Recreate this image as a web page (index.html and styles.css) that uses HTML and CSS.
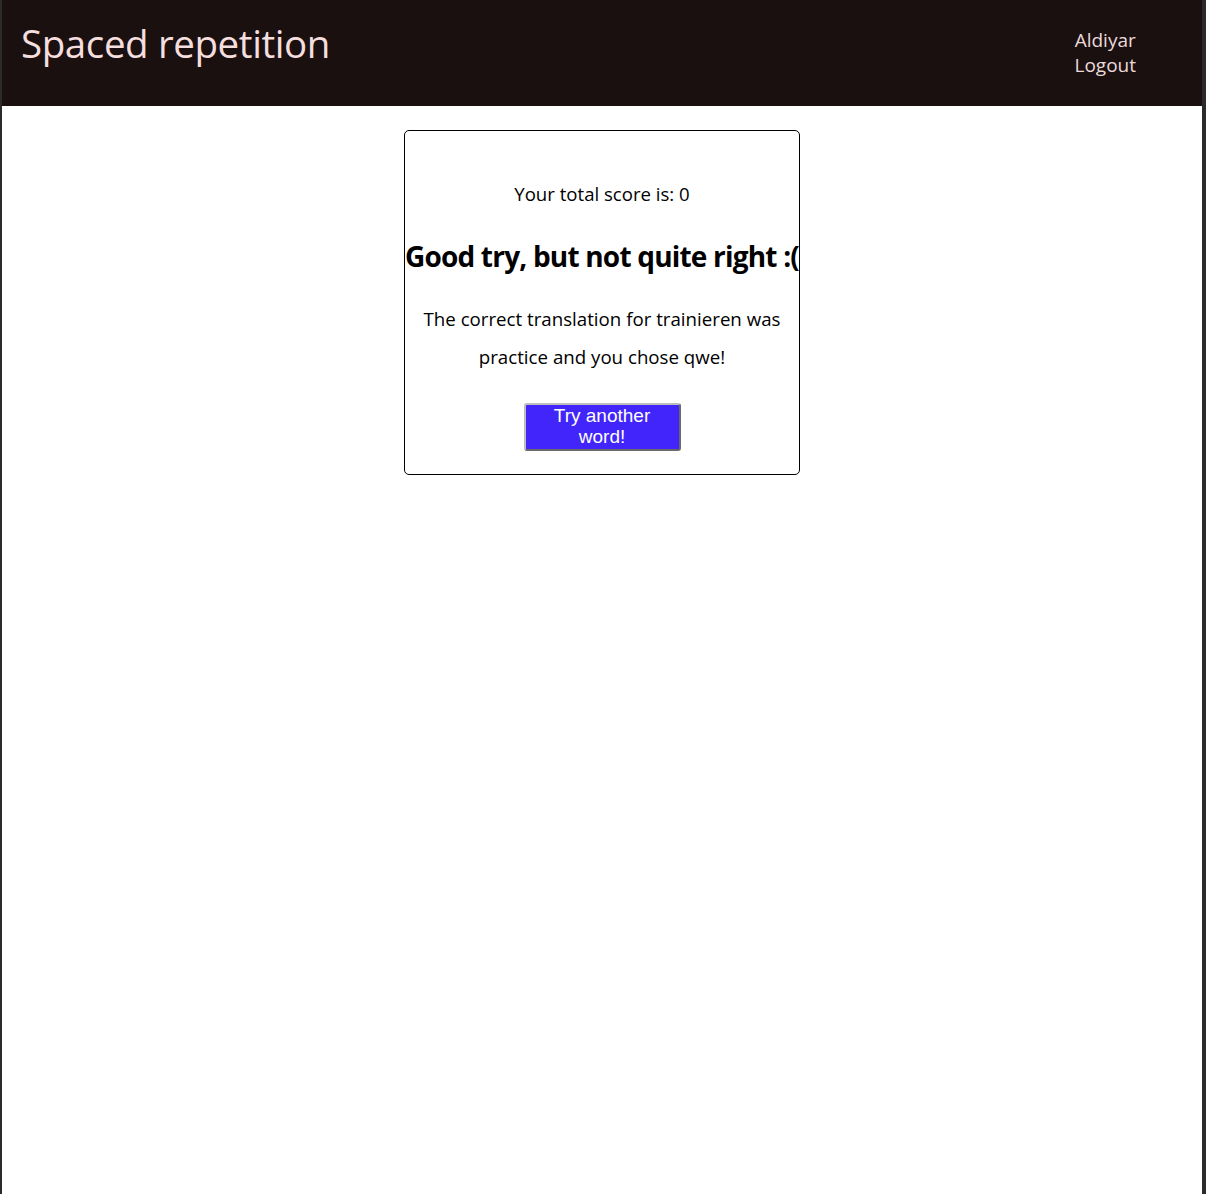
FILE: index.html
```html
<!DOCTYPE html>
<html lang="en">
<head>
<meta charset="utf-8">
<title>Spaced repetition</title>
<link rel="stylesheet" href="styles.css">
</head>
<body>
<div class="frame">
  <header class="topbar">
    <h1 class="brand">Spaced repetition</h1>
    <nav class="user-nav">
      <span class="user-name">Aldiyar</span>
      <a class="logout" href="#">Logout</a>
    </nav>
  </header>
  <main class="content">
    <section class="card">
      <p class="score">Your total score is: 0</p>
      <h2 class="verdict">Good try, but not quite right :(</h2>
      <p class="explain">The correct translation for trainieren was practice and you chose qwe!</p>
      <button class="next-btn" type="button">Try another word!</button>
    </section>
  </main>
</div>
</body>
</html>
```
FILE: styles.css
```css
* { box-sizing: border-box; }
html, body { margin: 0; padding: 0; }
body {
  background: #2b2b2b;
  font-family: "Open Sans", "Noto Sans", sans-serif;
}
.frame {
  margin: 0 4px 0 2px;
  min-height: 1194px;
  background: #ffffff;
}
.topbar {
  height: 106px;
  background: #1a1010;
  display: flex;
  justify-content: space-between;
  align-items: flex-start;
  padding: 0 66px 0 19px;
}
.brand {
  margin: 18px 0 0;
  font-size: 38.5px;
  font-weight: 500;
  line-height: 50px;
  color: #f4dede;
  letter-spacing: -0.4px;
}
.user-nav {
  display: flex;
  flex-direction: column;
  align-items: center;
  margin-top: 28px;
  font-size: 19px;
  line-height: 25px;
  color: #ecdada;
}
.logout { color: #ecdada; text-decoration: none; }
.content {
  display: flex;
  justify-content: center;
  padding-top: 24px;
}
.card {
  width: 396px;
  border: 1px solid #000;
  border-radius: 5px;
  padding: 0 0 23px;
  text-align: center;
  color: #000;
}
.score {
  margin: 52px 0 0;
  font-size: 18.6px;
  line-height: 22px;
}
.verdict {
  margin: 34px -4px 0;
  font-size: 28px;
  line-height: 34px;
  font-weight: 700;
  letter-spacing: -0.8px;
  white-space: nowrap;
}
.explain {
  margin: 27px auto 0;
  width: 380px;
  font-size: 18.7px;
  line-height: 38px;
}
.next-btn {
  display: block;
  margin: 27px auto 0;
  width: 157px;
  height: 48px;
  padding: 0 8px 4px;
  background: #4125fb;
  color: #fff;
  border: 2px outset #bdbdbd;
  border-radius: 3px;
  font-family: "Liberation Sans", Arial, sans-serif;
  font-size: 19px;
  line-height: 21px;
}
```
